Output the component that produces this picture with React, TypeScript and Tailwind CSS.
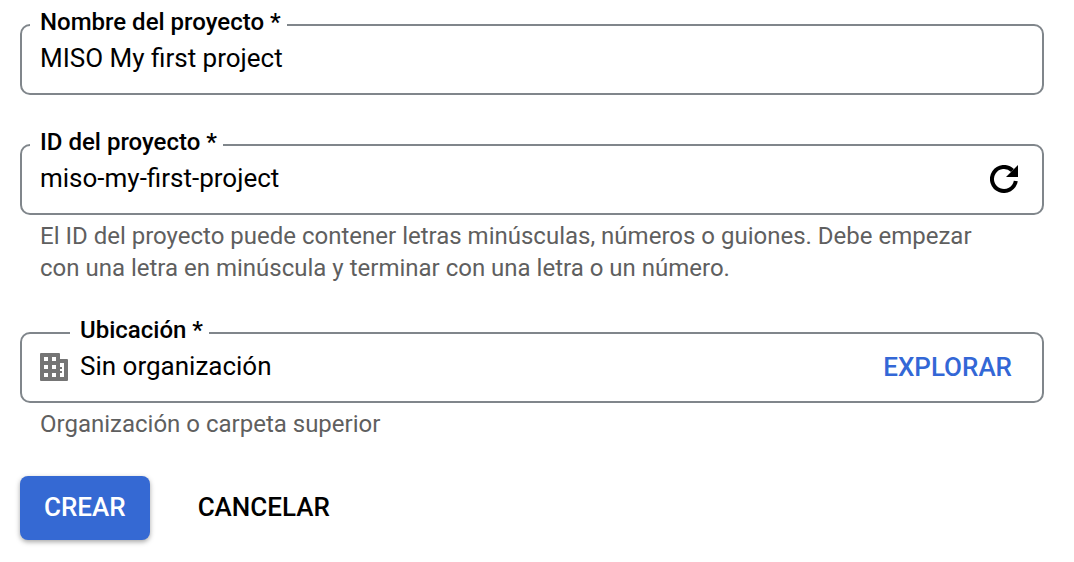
import React, { useState } from "react";

type FieldProps = {
  id: string;
  label: string;
  value: string;
  onChange: (value: string) => void;
  hint?: string;
  leading?: React.ReactNode;
  trailing?: React.ReactNode;
};

function RefreshIcon() {
  return (
    <svg viewBox="0 0 28 28" className="size-7" aria-hidden="true">
      <path
        d="M25.8 16A12 12 0 1 1 22.5 5.5"
        fill="none"
        stroke="currentColor"
        strokeWidth="4"
      />
      <path d="M28 0V12H16Z" fill="currentColor" />
    </svg>
  );
}

function OrganizationIcon() {
  return (
    <svg viewBox="0 0 28 28" className="size-7 text-[#757575]" aria-hidden="true">
      <path
        fill="currentColor"
        fillRule="evenodd"
        d="M1 0H19Q20 0 20 1V6H27Q28 6 28 7V27Q28 28 27 28H1Q0 28 0 27V1Q0 0 1 0ZM4 4V8H8V4ZM12 4V8H16V4ZM4 12V16H8V12ZM12 12V16H16V12ZM4 20V24H8V20ZM12 20V24H16V20ZM20 10V14H22V16H20V18H22V20H20V24H24V10Z"
      />
    </svg>
  );
}

function Field({ id, label, value, onChange, hint, leading, trailing }: FieldProps) {
  return (
    <div>
      <fieldset className="h-[84px] min-w-0 rounded-[10px] border-2 border-[#80868b] pr-6 pl-2">
        <legend className={leading ? "ml-10 pr-1.5 pl-2.5" : "pr-1.5 pl-2.5"}>
          <label htmlFor={id} className="block h-7 text-2xl leading-[22px] font-medium">
            {label}
          </label>
        </legend>
        <div className="flex h-10 items-center gap-3 pl-2.5">
          {leading}
          <input
            id={id}
            value={value}
            onChange={(e) => onChange(e.target.value)}
            aria-describedby={hint ? id + "-hint" : undefined}
            className="min-w-0 flex-1 bg-transparent pb-0.5 text-[26px] leading-8 outline-none"
          />
          {trailing}
        </div>
      </fieldset>
      {hint && (
        <p id={id + "-hint"} className="max-w-[980px] px-5 pt-[5px] text-2xl leading-8 text-[#5f5f5f]">
          {hint}
        </p>
      )}
    </div>
  );
}

export default function App() {
  const [name, setName] = useState("MISO My first project");
  const [projectId, setProjectId] = useState("miso-my-first-project");
  const [location, setLocation] = useState("Sin organización");

  return (
    <form
      className="min-h-screen bg-white pt-[11px] pr-[30px] pb-5 pl-5 font-[Roboto,sans-serif] text-black"
      onSubmit={(e) => e.preventDefault()}
    >
      <div className="flex flex-col gap-9">
        <Field id="name" label="Nombre del proyecto *" value={name} onChange={setName} />
        <div className="-mb-px">
          <Field
            id="project-id"
            label="ID del proyecto *"
            value={projectId}
            onChange={setProjectId}
            hint="El ID del proyecto puede contener letras minúsculas, números o guiones. Debe empezar con una letra en minúscula y terminar con una letra o un número."
            trailing={
              <button type="button" aria-label="Actualizar">
                <RefreshIcon />
              </button>
            }
          />
        </div>
        <Field
          id="location"
          label="Ubicación *"
          value={location}
          onChange={setLocation}
          hint="Organización o carpeta superior"
          leading={<OrganizationIcon />}
          trailing={
            <button type="button" className="pr-1.5 text-[26px] leading-8 font-medium text-[#3367d6]">
              EXPLORAR
            </button>
          }
        />
      </div>
      <div className="mt-9 flex gap-6">
        <button
          type="submit"
          className="h-16 rounded-lg bg-[#3569d3] px-6 pb-0.5 text-[26px] leading-8 font-medium text-white shadow-[0_2px_5px_rgba(0,0,0,0.35)]"
        >
          CREAR
        </button>
        <button type="button" className="h-16 px-6 pb-0.5 text-[26px] leading-8 font-medium">
          CANCELAR
        </button>
      </div>
    </form>
  );
}
